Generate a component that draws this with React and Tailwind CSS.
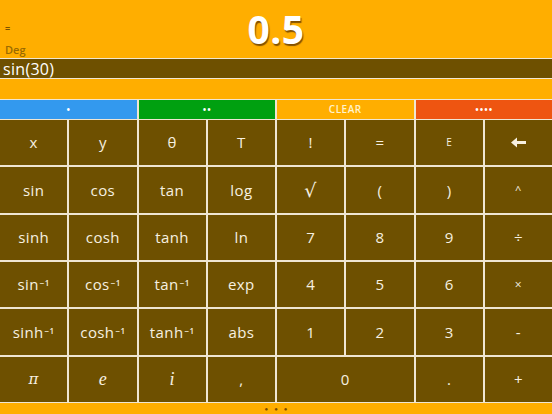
import React from "react";

const F = { fontFamily: '"Open Sans", "Noto Sans", sans-serif' };

function Sup({ base }) {
  return (
    <span>
      {base}
      <sup className="text-[8px] font-semibold relative -top-[4px] ml-[1px]">−1</sup>
    </span>
  );
}

function Arrow() {
  return (
    <svg width="15" height="11" viewBox="0 0 15 11">
      <polygon points="0,5.5 6,0.5 6,10.5" fill="#f7f0e0" />
      <rect x="5" y="4" width="10" height="3" fill="#f7f0e0" />
    </svg>
  );
}

const rows = [
  ["x", "y", "θ", "T", "!", "=", { t: "E", c: "text-[10px] font-medium" }, { t: <Arrow />, c: "" }],
  ["sin", "cos", "tan", "log", { t: "√", c: "text-[19px] font-['DejaVu_Serif'] font-light" }, "(", ")", { t: "^", c: "text-[11px] font-medium" }],
  ["sinh", "cosh", "tanh", "ln", "7", "8", "9", "÷"],
  [{ s: "sin" }, { s: "cos" }, { s: "tan" }, "exp", "4", "5", "6", { t: "×", c: "text-[12px] font-medium" }],
  [{ s: "sinh" }, { s: "cosh" }, { s: "tanh" }, "abs", "1", "2", "3", "-"],
];

function Cell({ k, span }) {
  let content, cls = "text-[15px] font-medium";
  if (typeof k === "string") content = k;
  else if (k.s) content = <Sup base={k.s} />;
  else {
    content = k.t;
    cls = k.c;
  }
  return (
    <div
      className={`bg-[#6e5000] flex items-center justify-center text-[#f7f0e0] tracking-[0.4px] ${span ? "col-span-2" : ""} ${cls}`}
    >
      {content}
    </div>
  );
}

export default function App() {
  return (
    <div className="w-[552px] h-[414px] bg-[#ffae00] flex flex-col overflow-hidden" style={F}>
      <div className="h-[58px] relative flex items-center justify-center">
        <span className="absolute left-[5px] top-[22px] text-[9px] font-bold text-[#7a5200]">=</span>
        <span className="absolute left-[5px] top-[42px] text-[11px] font-semibold text-[#9a6a00]">Deg</span>
        <span
          className="text-[39px] font-bold text-white leading-none tracking-[0.5px] pb-[2px]"
          style={{ textShadow: "1px 2px 1px rgba(90,50,0,0.75)" }}
        >
          0.5
        </span>
      </div>
      <div className="h-[21px] bg-[#6e5000] border-y border-[#f0e6d2] flex items-center px-[3px] text-[16px] text-white leading-none tracking-[0.3px]">
        sin(30)
      </div>
      <div className="h-[20px]" />
      <div className="h-[20px] grid grid-cols-4 gap-[2px] bg-[#f0e6d2] border-t border-[#f0e6d2]">
        <div className="bg-[#3399ee] flex items-center justify-center text-white text-[12px] leading-none">•</div>
        <div className="bg-[#00a010] flex items-center justify-center text-white text-[12px] leading-none">••</div>
        <div className="bg-[#ffae00] flex items-center justify-center text-[#fff3cc] text-[10px] font-semibold tracking-[0.5px]">CLEAR</div>
        <div className="bg-[#ee5511] flex items-center justify-center text-white text-[12px] leading-none">••••</div>
      </div>
      <div className="grid grid-cols-8 grid-rows-6 gap-[2px] bg-[#f0e6d2] py-[1px] h-[284px]">
        {rows.map((r, i) => r.map((k, j) => <Cell key={`${i}-${j}`} k={k} />))}
        <Cell k={{ t: "π", c: "text-[15px] font-['DejaVu_Serif'] italic font-normal" }} />
        <Cell k={{ t: "e", c: "font-['Liberation_Serif'] italic font-normal text-[18px]" }} />
        <Cell k={{ t: "i", c: "font-['Liberation_Serif'] italic font-normal text-[18px]" }} />
        <Cell k="," />
        <Cell k="0" span />
        <Cell k="." />
        <Cell k="+" />
      </div>
      <div className="flex-1 flex items-center justify-center gap-[6px] text-[#7a4a00] text-[6px] leading-none">
        <span>●</span>
        <span>●</span>
        <span>●</span>
      </div>
    </div>
  );
}
